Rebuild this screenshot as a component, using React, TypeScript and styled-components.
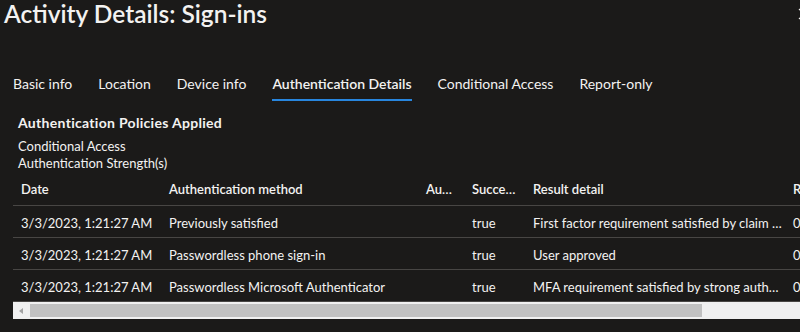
import React from "react";
import styled, { createGlobalStyle } from "styled-components";

const GlobalStyle = createGlobalStyle`
  html, body {
    margin: 0;
    padding: 0;
    background: #1b1a19;
  }
  body {
    font-family: "Segoe UI", Lato, "Open Sans", sans-serif;
    color: #f3f2f1;
  }
`;

interface SignInStep {
  date: string;
  method: string;
  detail: string;
  succeeded: string;
  result: string;
  requirement: string;
}

const tabs = [
  "Basic info",
  "Location",
  "Device info",
  "Authentication Details",
  "Conditional Access",
  "Report-only",
];

const steps: SignInStep[] = [
  {
    date: "3/3/2023, 1:21:27 AM",
    method: "Previously satisfied",
    detail: "",
    succeeded: "true",
    result: "First factor requirement satisfied by claim in the token",
    requirement: "0",
  },
  {
    date: "3/3/2023, 1:21:27 AM",
    method: "Passwordless phone sign-in",
    detail: "",
    succeeded: "true",
    result: "User approved",
    requirement: "0",
  },
  {
    date: "3/3/2023, 1:21:27 AM",
    method: "Passwordless Microsoft Authenticator",
    detail: "",
    succeeded: "true",
    result: "MFA requirement satisfied by strong authentication",
    requirement: "0",
  },
];

const columns = [
  { title: "Date", width: 148 },
  { title: "Authentication method", width: 257 },
  { title: "Authentication method detail", width: 46 },
  { title: "Succeeded", width: 61 },
  { title: "Result detail", width: 260 },
  { title: "Requirement", width: 120 },
];

export default function App() {
  return (
    <>
      <GlobalStyle />
      <Panel>
        <Header>
          <Title>Activity Details: Sign-ins</Title>
          <CloseButton aria-label="Close">
            <svg width="12" height="12" viewBox="0 0 12 12">
              <path d="M1 1 L11 11 M11 1 L1 11" stroke="#f3f2f1" strokeWidth="1.2" />
            </svg>
          </CloseButton>
        </Header>

        <TabBar>
          {tabs.map((t) => (
            <Tab key={t} $active={t === "Authentication Details"}>
              {t}
            </Tab>
          ))}
          <MoreButton aria-label="More">
            <svg width="16" height="4" viewBox="0 0 16 4">
              <circle cx="2" cy="2" r="1.2" fill="#c8c6c4" />
              <circle cx="8" cy="2" r="1.2" fill="#c8c6c4" />
              <circle cx="14" cy="2" r="1.2" fill="#c8c6c4" />
            </svg>
          </MoreButton>
        </TabBar>

        <Policies>
          <SectionTitle>Authentication Policies Applied</SectionTitle>
          <PolicyLine>Conditional Access</PolicyLine>
          <PolicyLine>Authentication Strength(s)</PolicyLine>
        </Policies>

        <TableWrap>
          <Table>
            <colgroup>
              {columns.map((c) => (
                <col key={c.title} style={{ width: c.width }} />
              ))}
            </colgroup>
            <thead>
              <tr>
                {columns.map((c) => (
                  <HeadCell key={c.title}>{c.title}</HeadCell>
                ))}
              </tr>
            </thead>
            <tbody>
              {steps.map((s, i) => (
                <tr key={i}>
                  <Cell>{s.date}</Cell>
                  <Cell>{s.method}</Cell>
                  <Cell>{s.detail}</Cell>
                  <Cell>{s.succeeded}</Cell>
                  <Cell $tight>{s.result}</Cell>
                  <Cell>{s.requirement}</Cell>
                </tr>
              ))}
            </tbody>
          </Table>
          <ScrollBar>
            <ScrollArrow />
            <ScrollThumb />
          </ScrollBar>
        </TableWrap>
      </Panel>
    </>
  );
}

const Panel = styled.div`
  width: 800px;
  height: 332px;
  overflow: hidden;
  background: #1b1a19;
`;

const Header = styled.div`
  display: flex;
  justify-content: space-between;
  align-items: flex-start;
  height: 67px;
  padding-left: 4px;
  margin-right: -10px;
`;

const Title = styled.h1`
  margin: 0;
  font-size: 24.5px;
  font-weight: 600;
  line-height: 28px;
  color: #f3f2f1;
`;

const CloseButton = styled.button`
  background: none;
  border: none;
  padding: 0;
  margin-top: 8px;
  width: 12px;
  height: 12px;
  display: flex;
`;

const TabBar = styled.div`
  display: flex;
  align-items: flex-start;
  margin-right: -20px;
`;

const Tab = styled.div<{ $active?: boolean }>`
  margin: 0 13px;
  padding-top: 2px;
  line-height: 30px;
  font-size: 14px;
  font-weight: ${(p) => (p.$active ? 600 : 400)};
  color: #f3f2f1;
  border-bottom: 2px solid ${(p) => (p.$active ? "#2886de" : "transparent")};
  white-space: nowrap;
`;

const MoreButton = styled.button`
  margin-left: auto;
  background: none;
  border: none;
  padding: 0;
  margin-top: 15px;
  display: flex;
`;

const Policies = styled.div`
  padding: 13px 0 0 18px;
`;

const SectionTitle = styled.div`
  font-size: 14px;
  font-weight: 700;
  letter-spacing: 0.3px;
  line-height: 18px;
  margin-bottom: 6px;
`;

const PolicyLine = styled.div`
  font-size: 13px;
  line-height: 17px;
`;

const TableWrap = styled.div`
  margin-left: 13px;
  width: 900px;
`;

const Table = styled.table`
  table-layout: fixed;
  border-collapse: collapse;
  width: 892px;
  font-size: 13px;
`;

const HeadCell = styled.th`
  height: 33px;
  padding: 0 8px;
  text-align: left;
  font-weight: 600;
  white-space: nowrap;
  overflow: hidden;
  text-overflow: ellipsis;
  border-bottom: 1px solid #484644;
`;

const Cell = styled.td<{ $tight?: boolean }>`
  height: 29px;
  padding: 2px ${(p) => (p.$tight ? "3px" : "8px")} 0 8px;
  white-space: nowrap;
  overflow: hidden;
  text-overflow: ellipsis;
  border-bottom: 1px solid #484644;
`;

const ScrollBar = styled.div`
  display: flex;
  align-items: center;
  height: 17px;
  background: #f0f0f0;
`;

const ScrollArrow = styled.div`
  width: 0;
  height: 0;
  margin-left: 6px;
  border-top: 3px solid transparent;
  border-bottom: 3px solid transparent;
  border-right: 4px solid #a3a3a3;
`;

const ScrollThumb = styled.div`
  margin-left: 7px;
  width: 672px;
  height: 13px;
  background: #c1c1c1;
`;
